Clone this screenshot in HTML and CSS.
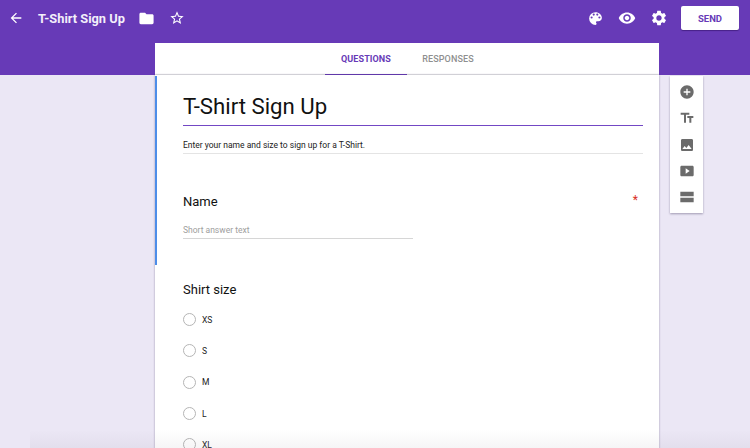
FILE: index.html
```html
<!DOCTYPE html>
<html lang="en">
<head>
<meta charset="utf-8">
<title>T-Shirt Sign Up</title>
<link rel="stylesheet" href="styles.css">
</head>
<body>
<div class="app">
  <header class="header">
    <div class="topbar">
      <svg class="ico back" viewBox="0 0 24 24"><path d="M20 11H7.830l5.590-5.590L12 4l-8 8 8 8 1.410-1.410L7.830 13H20z"/></svg>
      <div class="doc-title">T-Shirt Sign Up</div>
      <svg class="ico folder" viewBox="0 0 24 24"><path d="M10 4H4c-1.100 0-2 .9-2 2v12c0 1.100.9 2 2 2h16c1.100 0 2-.9 2-2V8c0-1.100-.9-2-2-2h-8z"/></svg>
      <svg class="ico star" viewBox="0 0 24 24"><path d="M22 9.240l-7.190-.620L12 2 9.190 8.630 2 9.240l5.460 4.730L5.820 21 12 17.270 18.180 21l-1.630-7.030L22 9.240zM12 15.400l-3.760 2.270 1-4.280-3.320-2.880 4.380-.380L12 6.100l1.710 4.040 4.380.380-3.320 2.880 1 4.280L12 15.400z"/></svg>
      <div class="spacer"></div>
      <svg class="ico palette" viewBox="0 0 24 24"><path d="M12 3a9 9 0 0 0 0 18c.83 0 1.500-.67 1.500-1.500 0-.39-.15-.74-.39-1.010-.23-.26-.38-.61-.38-.99 0-.83.67-1.500 1.500-1.500H16c2.760 0 5-2.240 5-5 0-4.420-4.030-8-9-8zm-5.500 9a1.500 1.500 0 1 1 0-3 1.500 1.500 0 0 1 0 3zm3-4a1.500 1.500 0 1 1 0-3 1.500 1.500 0 0 1 0 3zm5 0a1.500 1.500 0 1 1 0-3 1.500 1.500 0 0 1 0 3zm3 4a1.500 1.500 0 1 1 0-3 1.500 1.500 0 0 1 0 3z"/></svg>
      <svg class="ico eye" viewBox="0 0 24 24"><path d="M12 4.500C7 4.500 2.730 7.610 1 12c1.730 4.390 6 7.500 11 7.500s9.270-3.110 11-7.500c-1.730-4.390-6-7.500-11-7.500zM12 17c-2.760 0-5-2.240-5-5s2.240-5 5-5 5 2.240 5 5-2.240 5-5 5zm0-8c-1.660 0-3 1.340-3 3s1.340 3 3 3 3-1.340 3-3-1.340-3-3-3z"/></svg>
      <svg class="ico gear" viewBox="0 0 24 24"><path d="M19.140 12.940c.04-.3.060-.61.060-.94 0-.32-.02-.64-.07-.94l2.030-1.580a.49.490 0 0 0 .12-.61l-1.920-3.320a.488.488 0 0 0-.59-.22l-2.390.96c-.5-.38-1.030-.7-1.620-.94l-.36-2.540a.484.484 0 0 0-.48-.41h-3.840c-.24 0-.43.17-.47.41l-.36 2.540c-.59.24-1.130.57-1.620.94l-2.390-.96c-.22-.08-.47 0-.59.22L2.740 8.870c-.12.21-.08.47.12.61l2.030 1.580c-.05.3-.09.63-.09.94s.02.64.07.94l-2.030 1.580a.49.490 0 0 0-.12.61l1.920 3.320c.12.22.37.29.59.22l2.390-.96c.5.38 1.030.7 1.620.94l.36 2.540c.05.24.24.41.48.41h3.840c.24 0 .44-.17.47-.41l.36-2.540c.59-.24 1.130-.56 1.620-.94l2.390.96c.22.08.47 0 .59-.22l1.920-3.320c.12-.22.07-.47-.12-.61l-2.010-1.580zM12 15.600A3.610 3.610 0 0 1 8.400 12c0-1.980 1.620-3.600 3.600-3.600s3.600 1.620 3.600 3.600-1.620 3.600-3.600 3.600z"/></svg>
      <div class="send">SEND</div>
    </div>
    <nav class="tabs">
      <div class="tab active">QUESTIONS</div>
      <div class="tab">RESPONSES</div>
    </nav>
  </header>

  <main class="main">
    <section class="card">
      <div class="focus-bar"></div>
      <h1 class="form-title">T-Shirt Sign Up</h1>
      <p class="form-desc">Enter your name and size to sign up for a T-Shirt.</p>

      <div class="question name-q">
        <div class="q-head">
          <h2 class="q-title">Name</h2>
          <span class="required">*</span>
        </div>
        <div class="short-answer">Short answer text</div>
      </div>

      <div class="question size-q">
        <h2 class="q-title">Shirt size</h2>
        <ul class="options">
          <li class="option"><span class="radio"></span>XS</li>
          <li class="option"><span class="radio"></span>S</li>
          <li class="option"><span class="radio"></span>M</li>
          <li class="option"><span class="radio"></span>L</li>
          <li class="option"><span class="radio"></span>XL</li>
        </ul>
      </div>
    </section>

    <aside class="tools">
      <svg class="tool" viewBox="0 0 24 24"><path d="M12 2C6.480 2 2 6.480 2 12s4.480 10 10 10 10-4.480 10-10S17.520 2 12 2zm5 11h-4v4h-2v-4H7v-2h4V7h2v4h4v2z"/></svg>
      <svg class="tool" viewBox="0 0 24 24"><path d="M2.500 4v3h5v12h3V7h5V4h-13zm19 5h-9v3h3v7h3v-7h3V9z"/></svg>
      <svg class="tool" viewBox="0 0 24 24"><path d="M21 19V5c0-1.100-.9-2-2-2H5c-1.100 0-2 .9-2 2v14c0 1.100.9 2 2 2h14c1.100 0 2-.9 2-2zM8.500 13.500l2.500 3.010L14.500 12l4.500 6H5l3.500-4.500z"/></svg>
      <svg class="tool" viewBox="0 0 24 24"><path d="M20 4H4c-1.100 0-2 .9-2 2v12c0 1.100.9 2 2 2h16c1.100 0 2-.9 2-2V6c0-1.100-.9-2-2-2zm-10 12V8l6 4-6 4z"/></svg>
      <svg class="tool" viewBox="0 0 24 24"><path d="M2 4h20v7H2zM2 13h20v7H2z"/></svg>
    </aside>
  </main>
  <div class="bottom-fade"></div>
</div>
</body>
</html>
```
FILE: styles.css
```css
* { box-sizing: border-box; }
html, body { margin: 0; padding: 0; height: 448px; overflow: hidden; }
body { font-family: Roboto, "Liberation Sans", sans-serif; background: #ebe7f5; color: #111; }
.app { position: relative; width: 750px; height: 448px; overflow: hidden; display: flex; flex-direction: column; }

.header { background: #673ab7; height: 75px; flex: none; }
.topbar { height: 43px; display: flex; align-items: center; padding-left: 8px; padding-right: 11px; padding-bottom: 7px; }
.ico { width: 16px; height: 16px; fill: #fff; flex: none; display: block; }
.doc-title { margin-left: 14px; font-size: 12.800px; font-weight: 700; color: #f3effa; width: 87px; white-space: nowrap; }
.folder { margin-left: 13px; width: 17px; height: 17px; }
.star { margin-left: 14px; width: 16px; height: 16px; }
.spacer { flex: 1; }
.palette { width: 17px; height: 17px; }
.eye { margin-left: 14px; width: 18px; height: 18px; }
.gear { margin-left: 14px; width: 18px; height: 18px; }
.send { margin-left: 13px; width: 58px; height: 24px; background: #fff; border-radius: 2px; color: #673ab7; font-size: 9.500px; font-weight: 700; display: flex; align-items: center; justify-content: center; box-shadow: 0 1px 1px rgba(40, 10, 90, .5); }

.tabs { margin-left: 155px; width: 504px; height: 32px; background: #fff; display: flex; justify-content: center; border-bottom: 1px solid #ececec; }
.tab { width: 82px; height: 32px; font-size: 9px; font-weight: 500; color: #8f8f8f; display: flex; align-items: center; justify-content: center; letter-spacing: .1px; }
.tab.active { color: #673ab7; border-bottom: 1px solid #673ab7; font-weight: 700; }

.main { flex: 1; display: flex; align-items: flex-start; padding-left: 155px; gap: 11px; min-height: 0; }
.card { position: relative; width: 504px; height: 420px; background: #fff; padding: 17px 16px 0 28px; box-shadow: 0 0 2px rgba(60, 50, 90, .45); flex: none; }
.focus-bar { position: absolute; left: 0; top: 1px; width: 2px; height: 189px; background: #4d8de8; }
.form-title { margin: 0; height: 34px; font-size: 22.200px; line-height: 28px; font-weight: 400; color: #111; border-bottom: 1px solid #7348c4; }
.form-desc { margin: 0; padding-top: 14px; height: 28px; font-size: 8.500px; line-height: 11px; color: #222; border-bottom: 1px solid #e4e4e4; }

.q-title { margin: 0; font-size: 13px; line-height: 18px; font-weight: 400; color: #111; }
.name-q { margin-top: 39px; }
.q-head { display: flex; justify-content: space-between; padding-right: 5px; }
.required { color: #d93025; font-size: 12px; line-height: 14px; }
.short-answer { margin-top: 12px; width: 230px; height: 16px; font-size: 8.500px; line-height: 11px; color: #9e9e9e; border-bottom: 1px solid #d6d6d6; padding-top: 2px; }
.size-q { margin-top: 42px; }
.options { list-style: none; margin: 5px 0 0; padding: 0; }
.option { display: flex; align-items: center; height: 31.300px; font-size: 8.500px; color: #222; }
.radio { width: 13px; height: 13px; border: 1px solid #b5b5b5; border-radius: 50%; margin-right: 6px; flex: none; }

.tools { width: 33px; height: 137px; margin-top: 1px; background: #fff; box-shadow: 0 1px 2px rgba(50, 40, 80, .4); display: flex; flex-direction: column; align-items: center; justify-content: space-between; padding: 8px 0; flex: none; }
.tool { width: 16px; height: 16px; fill: #6b6b6b; display: block; }

.bottom-fade { position: absolute; left: 30px; right: 0; bottom: 0; height: 18px; background: linear-gradient(to bottom, rgba(120, 110, 130, 0), rgba(120, 110, 130, .07)); pointer-events: none; }
```
